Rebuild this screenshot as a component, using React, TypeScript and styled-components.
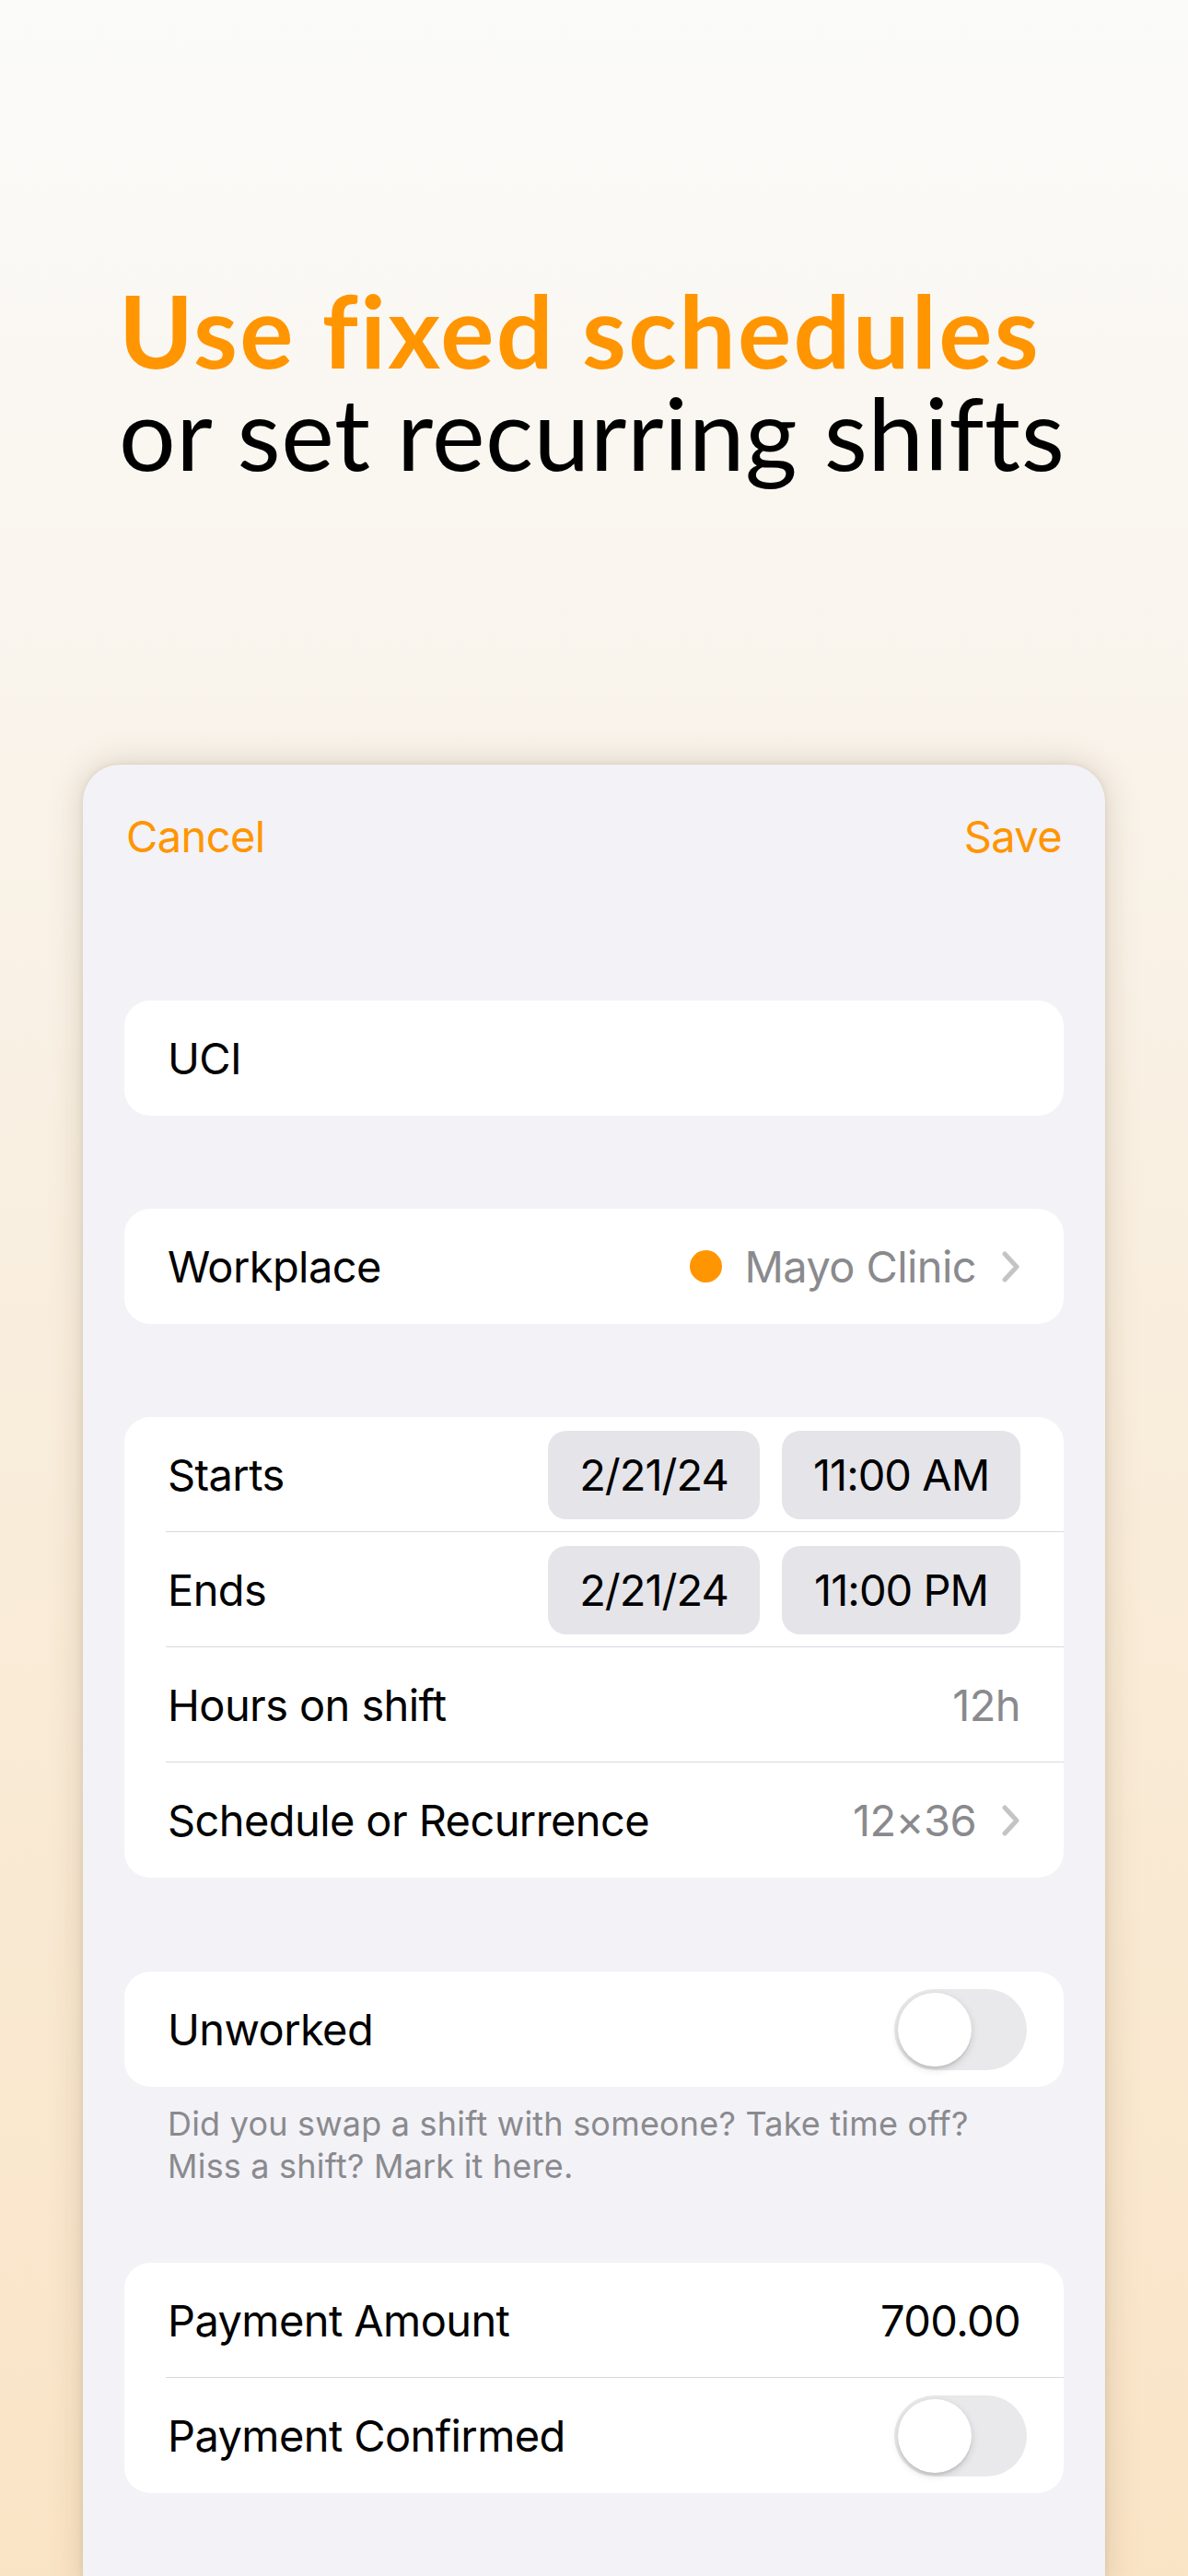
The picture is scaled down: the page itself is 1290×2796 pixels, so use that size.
import React from "react";
import styled, { createGlobalStyle } from "styled-components";

const Global = createGlobalStyle`
  html, body { margin: 0; padding: 0; }
  body {
    width: 1290px;
    height: 2796px;
    overflow: hidden;
    background: linear-gradient(180deg, #fbfbfa 0%, #f9f3ea 30%, #f9ecd9 60%, #fae4c6 100%);
    font-family: Inter, "Noto Sans", sans-serif;
    -webkit-font-smoothing: antialiased;
  }
`;

const Page = styled.div`
  width: 1290px;
  height: 2796px;
  display: flex;
  flex-direction: column;
  overflow: hidden;
`;

const Hero = styled.header`
  padding: 302px 0 0 129px;
  height: 830px;
  flex-shrink: 0;
  box-sizing: border-box;
  font-family: Lato, "Noto Sans", sans-serif;
  font-size: 109px;
  line-height: 111px;
`;

const HeroLine = styled.div<{ $accent?: boolean }>`
  color: ${(p) => (p.$accent ? "#ff9500" : "#000")};
  font-weight: ${(p) => (p.$accent ? 700 : 400)};
  letter-spacing: ${(p) => (p.$accent ? "2.4px" : "0.5px")};
  white-space: nowrap;
`;

const Sheet = styled.main`
  margin: 0 0 0 90px;
  width: 1110px;
  flex: 1;
  background: #f2f2f7;
  border-radius: 40px 40px 0 0;
  box-shadow: 0 0 36px rgba(110, 80, 40, 0.22), 0 0 6px rgba(110, 80, 40, 0.12);
  padding: 0 45px;
  box-sizing: border-box;
  display: flex;
  flex-direction: column;
`;

const NavBar = styled.nav`
  height: 154px;
  display: flex;
  align-items: center;
  justify-content: space-between;
  padding: 0 2px;
  margin-bottom: 102px;
`;

const NavButton = styled.span`
  color: #ff9500;
  font-size: 47px;
  letter-spacing: -0.6px;
`;

const Group = styled.section<{ $gap?: number }>`
  background: #fff;
  border-radius: 28px;
  overflow: hidden;
  margin-bottom: ${(p) => p.$gap ?? 101}px;
`;

const Row = styled.div<{ $divider?: boolean }>`
  height: 125px;
  display: flex;
  align-items: center;
  padding: 0 47px;
  position: relative;
  box-sizing: border-box;
  &::after {
    content: "";
    display: ${(p) => (p.$divider ? "block" : "none")};
    position: absolute;
    left: 45px;
    right: 0;
    bottom: 0;
    height: 1.5px;
    background: #d9d9dd;
  }
`;

const Label = styled.span`
  font-size: 47px;
  color: #000;
  letter-spacing: -0.6px;
  flex: 1;
  white-space: nowrap;
`;

const Value = styled.span<{ $muted?: boolean }>`
  font-size: 47px;
  color: ${(p) => (p.$muted ? "#8a8a8e" : "#000")};
  letter-spacing: -0.6px;
  white-space: nowrap;
`;

const Trailing = styled.div`
  display: flex;
  align-items: center;
  gap: 32px;
`;

const Dot = styled.span`
  width: 35px;
  height: 35px;
  border-radius: 50%;
  background: #ff9500;
  margin-right: -8px;
`;

const Pills = styled.div`
  display: flex;
  gap: 24px;
`;

const Pill = styled.span<{ $w: number }>`
  width: ${(p) => p.$w}px;
  height: 96px;
  border-radius: 20px;
  background: #e4e4e9;
  display: flex;
  align-items: center;
  justify-content: center;
  font-size: 47px;
  letter-spacing: -1px;
  color: #000;
  white-space: nowrap;
`;

const Switch = styled.span`
  width: 144px;
  height: 88px;
  border-radius: 44px;
  background: #e9e9eb;
  display: flex;
  align-items: center;
  padding: 0 4px;
  box-sizing: border-box;
  margin-right: -7px;
`;

const Knob = styled.span`
  width: 80px;
  height: 80px;
  border-radius: 50%;
  background: #fff;
  box-shadow: 0 3px 8px rgba(0, 0, 0, 0.15), 0 3px 1px rgba(0, 0, 0, 0.06);
`;

const Footnote = styled.p`
  margin: 17px 0 82px;
  padding: 0 47px;
  font-size: 36px;
  line-height: 46px;
  color: #8a8a8e;
  letter-spacing: 0.2px;
`;

const Chevron = () => (
  <svg width="20" height="34" viewBox="0 0 20 34" style={{ marginLeft: -4 }}>
    <path d="M3 3 L16 17 L3 31" fill="none" stroke="#c4c4c7" strokeWidth="5" strokeLinecap="round" strokeLinejoin="round" />
  </svg>
);

const Toggle = () => (
  <Switch>
    <Knob />
  </Switch>
);

export default function App() {
  return (
    <Page>
      <Global />
      <Hero>
        <HeroLine $accent>Use fixed schedules</HeroLine>
        <HeroLine>or set recurring shifts</HeroLine>
      </Hero>
      <Sheet>
        <NavBar>
          <NavButton>Cancel</NavButton>
          <NavButton>Save</NavButton>
        </NavBar>

        <Group>
          <Row>
            <Label>UCI</Label>
          </Row>
        </Group>

        <Group>
          <Row>
            <Label>Workplace</Label>
            <Trailing>
              <Dot />
              <Value $muted>Mayo Clinic</Value>
              <Chevron />
            </Trailing>
          </Row>
        </Group>

        <Group $gap={102}>
          <Row $divider>
            <Label>Starts</Label>
            <Pills>
              <Pill $w={230}>2/21/24</Pill>
              <Pill $w={259}>11:00 AM</Pill>
            </Pills>
          </Row>
          <Row $divider>
            <Label>Ends</Label>
            <Pills>
              <Pill $w={230}>2/21/24</Pill>
              <Pill $w={259}>11:00 PM</Pill>
            </Pills>
          </Row>
          <Row $divider>
            <Label>Hours on shift</Label>
            <Value $muted>12h</Value>
          </Row>
          <Row>
            <Label>Schedule or Recurrence</Label>
            <Trailing>
              <Value $muted>12×36</Value>
              <Chevron />
            </Trailing>
          </Row>
        </Group>

        <Group $gap={0}>
          <Row>
            <Label>Unworked</Label>
            <Toggle />
          </Row>
        </Group>
        <Footnote>
          Did you swap a shift with someone? Take time off?
          <br />
          Miss a shift? Mark it here.
        </Footnote>

        <Group>
          <Row $divider>
            <Label>Payment Amount</Label>
            <Value>700.00</Value>
          </Row>
          <Row>
            <Label>Payment Confirmed</Label>
            <Toggle />
          </Row>
        </Group>
      </Sheet>
    </Page>
  );
}
